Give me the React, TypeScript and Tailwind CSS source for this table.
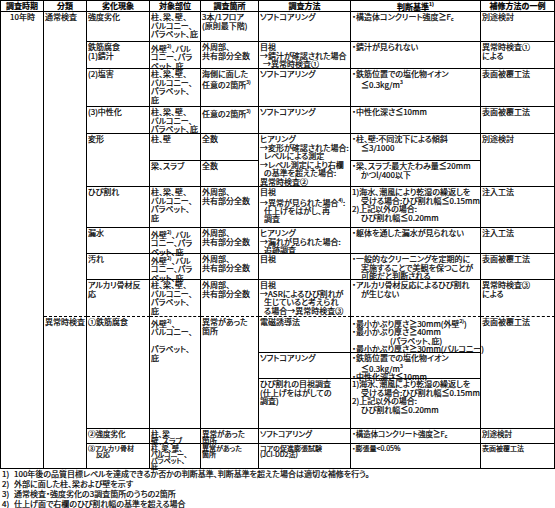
import type { ReactNode } from 'react';

// superscript footnote marks such as 2) or the ³ in m³
const Sup = ({ c }: { c: string }) => (
  <span className="align-super text-[5px] leading-none">{c}</span>
);

// indented continuation line
const In = ({ n = 4, children }: { n?: number; children: ReactNode }) => (
  <span className="inline-block" style={{ paddingLeft: n }}>
    {children}
  </span>
);

type CellProps = {
  lines: ReactNode[];
  rs?: number;
  dash?: boolean;
  center?: boolean;
  tight?: 'a' | 'b';
};

function C({ lines, rs, dash, center, tight }: CellProps) {
  const lh =
    tight === 'a' ? 'text-[7.5px] leading-[7px]' : tight === 'b' ? 'text-[7px] leading-[6px]' : 'leading-[8.5px]';
  return (
    <td
      rowSpan={rs}
      className={`border-r border-b border-black p-0 pl-[1px] pt-[1px] align-top ${
        dash ? '[border-bottom-style:dashed]' : ''
      } ${center ? 'text-center' : ''}`}
    >
      <div className={`h-0 ${lh}`}>
        {lines.map((l, i) => (
          <div key={i} className="whitespace-pre">
            {l === '' ? ' ' : l}
          </div>
        ))}
      </div>
    </td>
  );
}

const heads = ['調査時期', '分類', '劣化現象', '対象部位', '調査箇所', '調査方法', '判断基準', '補修方法の一例'];
const widths = [43, 43, 63, 51, 58, 92, 130, 74];

const ext: ReactNode[] = [<>外壁<Sup c="2)" />、バル</>, 'コニー、パラ', 'ペット、庇'];
const all4: ReactNode[] = ['柱、梁、壁、', 'バルコニー、', 'パラペット、', '庇'];
const all3: ReactNode[] = ['柱、梁、壁、', 'バルコニー、', 'パラペット、庇'];
const outer: ReactNode[] = ['外周部、', '共有部分全数'];
const crack: ReactNode[] = [
  '1)海水、潮風により乾湿の繰返しを',
  <In n={9}>受ける場合:ひび割れ幅≦0.15mm</In>,
  '2)上記以外の場合:',
  <In n={9}>ひび割れ幅≦0.20mm</In>,
];
const strength: ReactNode = <>・構造体コンクリート強度≧F<sub className="text-[5px]">c</sub></>;

const notes = [
  ['1)', '100年後の品質目標レベルを達成できるか否かの判断基準、判断基準を超えた場合は適切な補修を行う。'],
  ['2)', '外部に面した柱、梁および壁を示す'],
  ['3)', '通常検査・強度劣化の3調査箇所のうちの2箇所'],
  ['4)', '仕上げ面で右欄のひび割れ幅の基準を超える場合'],
];

export default function App() {
  return (
    <div className="w-[555px] h-[508px] bg-white text-black text-[8px] font-['Noto_Sans_CJK_JP',sans-serif] [font-feature-settings:'palt'] [-webkit-text-stroke:0.2px_#000] overflow-hidden">
      <table className="table-fixed w-[555px] border-separate border-spacing-0 border-l border-t border-black">
        <colgroup>
          {widths.map((w, i) => (
            <col key={i} style={{ width: w }} />
          ))}
        </colgroup>
        <tbody>
          <tr className="h-[11px]">
            {heads.map((h) => (
              <th key={h} className="border-r border-b border-black p-0 font-bold leading-[9px] text-center align-top">
                {h}
                {h === '判断基準' && <Sup c="1)" />}
              </th>
            ))}
          </tr>

          <tr className="h-[30px]">
            <C rs={15} center lines={['10年時']} />
            <C rs={10} dash lines={['通常検査']} />
            <C lines={['強度劣化']} />
            <C lines={all3} />
            <C lines={['3本/1フロア', '(原則最下階)']} />
            <C lines={['ソフトコアリング']} />
            <C lines={[strength]} />
            <C lines={['別途検討']} />
          </tr>

          <tr className="h-[27px]">
            <C lines={['鉄筋腐食', '(1)錆汁']} />
            <C lines={ext} />
            <C lines={outer} />
            <C lines={['目視', '→錆汁が確認された場合', <In n={3}>→異常時検査①</In>]} />
            <C lines={['・錆汁が見られない']} />
            <C lines={['異常時検査①', 'による']} />
          </tr>

          <tr className="h-[38px]">
            <C lines={['(2)塩害']} />
            <C lines={all4} />
            <C lines={['海側に面した', <>任意の2箇所<Sup c="3)" /></>]} />
            <C lines={['ソフトコアリング']} />
            <C lines={['・鉄筋位置での塩化物イオン', <In n={9}>≦0.3kg/m<Sup c="3" /></In>]} />
            <C lines={['表面被覆工法']} />
          </tr>

          <tr className="h-[27px]">
            <C lines={['(3)中性化']} />
            <C lines={all3} />
            <C lines={[<>任意の2箇所<Sup c="3)" /></>]} />
            <C lines={['ソフトコアリング']} />
            <C lines={['・中性化深さ≦10mm']} />
            <C lines={['表面被覆工法']} />
          </tr>

          <tr className="h-[27px]">
            <C rs={2} lines={['変形']} />
            <C lines={['柱、壁']} />
            <C lines={['全数']} />
            <C
              rs={2}
              lines={[
                'ヒアリング',
                '→変形が確認された場合:',
                <In>レベルによる測定</In>,
                '→レベル測定により右欄',
                <In>の基準を超えた場合:</In>,
                '異常時検査②',
              ]}
            />
            <C lines={['・柱、壁:不同沈下による傾斜', <In n={9}>≦3/1000</In>]} />
            <C rs={2} lines={['別途検討']} />
          </tr>

          <tr className="h-[26px]">
            <C lines={['梁、スラブ']} />
            <C lines={['全数']} />
            <C lines={['・梁、スラブ:最大たわみ量≦20mm', <In n={9}>かつl/400以下</In>]} />
          </tr>

          <tr className="h-[41px]">
            <C lines={['ひび割れ']} />
            <C lines={all4} />
            <C lines={outer} />
            <C
              lines={[
                '目視',
                <>→異常が見られた場合<Sup c="4)" />:</>,
                <In>仕上げをはがし、再</In>,
                <In>調査</In>,
              ]}
            />
            <C lines={crack} />
            <C lines={['注入工法']} />
          </tr>

          <tr className="h-[26px]">
            <C lines={['漏水']} />
            <C lines={ext} />
            <C lines={outer} />
            <C lines={['ヒアリング', '→漏れが見られた場合:', <In>追跡調査</In>]} />
            <C lines={['・躯体を通した漏水が見られない']} />
            <C lines={['注入工法']} />
          </tr>

          <tr className="h-[26px]">
            <C lines={['汚れ']} />
            <C lines={ext} />
            <C lines={outer} />
            <C lines={['目視']} />
            <C
              lines={[
                '・一般的なクリーニングを定期的に',
                <In n={9}>実施することで美観を保つことが</In>,
                <In n={9}>可能だと判断される</In>,
              ]}
            />
            <C lines={['表面被覆工法']} />
          </tr>

          <tr className="h-[37px]">
            <C dash lines={['アルカリ骨材反', '応']} />
            <C dash lines={all4} />
            <C dash lines={outer} />
            <C
              dash
              lines={['目視', '→ASRによるひび割れが', <In>生じていると考えられ</In>, <In>る場合→異常時検査③</In>]}
            />
            <C dash lines={['・アルカリ骨材反応によるひび割れ', <In n={9}>が生じない</In>]} />
            <C dash lines={['異常時検査③', 'による']} />
          </tr>

          <tr className="h-[36px]">
            <C rs={5} lines={['異常時検査']} />
            <C rs={3} lines={['①鉄筋腐食']} />
            <C rs={3} lines={[<>外壁<Sup c="2)" />、</>, 'バルコニー、', '', 'パラペット、', '庇']} />
            <C rs={3} lines={['異常があった', '箇所']} />
            <C lines={['電磁誘導法']} />
            <C
              lines={[
                <>・最小かぶり厚さ≧30mm(外壁<Sup c="2)" />)</>,
                '・最小かぶり厚さ≧40mm',
                <In n={38}>(パラペット、庇)</In>,
                '・最小かぶり厚さ≧30mm(バルコニー)',
              ]}
            />
            <C rs={3} lines={['表面被覆工法']} />
          </tr>

          <tr className="h-[26px]">
            <C lines={['ソフトコアリング']} />
            <C lines={['・鉄筋位置での塩化物イオン', <In n={9}>≦0.3kg/m<Sup c="3" /></In>, '・中性化深さ≦10mm']} />
          </tr>

          <tr className="h-[50px]">
            <C lines={['ひび割れの目視調査', '(仕上げをはがしての', '調査)']} />
            <C lines={crack} />
          </tr>

          <tr className="h-[15px]">
            <C tight="a" lines={['②強度劣化']} />
            <C tight="a" lines={['柱、梁', '壁、スラブ']} />
            <C tight="a" lines={['異常があった', '箇所']} />
            <C tight="a" lines={['ソフトコアリング']} />
            <C tight="a" lines={[strength]} />
            <C tight="a" lines={['別途検討']} />
          </tr>

          <tr className="h-[25px]">
            <C tight="b" lines={['③アルカリ骨材', <In n={8}>反応</In>]} />
            <C tight="b" lines={all4} />
            <C tight="b" lines={['異常があった', '箇所']} />
            <C tight="b" lines={['コアの促進膨張試験', '(JCI-DD2法)']} />
            <C tight="b" lines={['・膨張量<0.05%']} />
            <C tight="b" lines={['表面被覆工法']} />
          </tr>
        </tbody>
      </table>

      <div className="leading-[10px]">
        {notes.map(([n, t]) => (
          <div key={n} className="flex">
            <span className="w-[14px] pl-[2px]">{n}</span>
            <span>{t}</span>
          </div>
        ))}
      </div>
    </div>
  );
}
